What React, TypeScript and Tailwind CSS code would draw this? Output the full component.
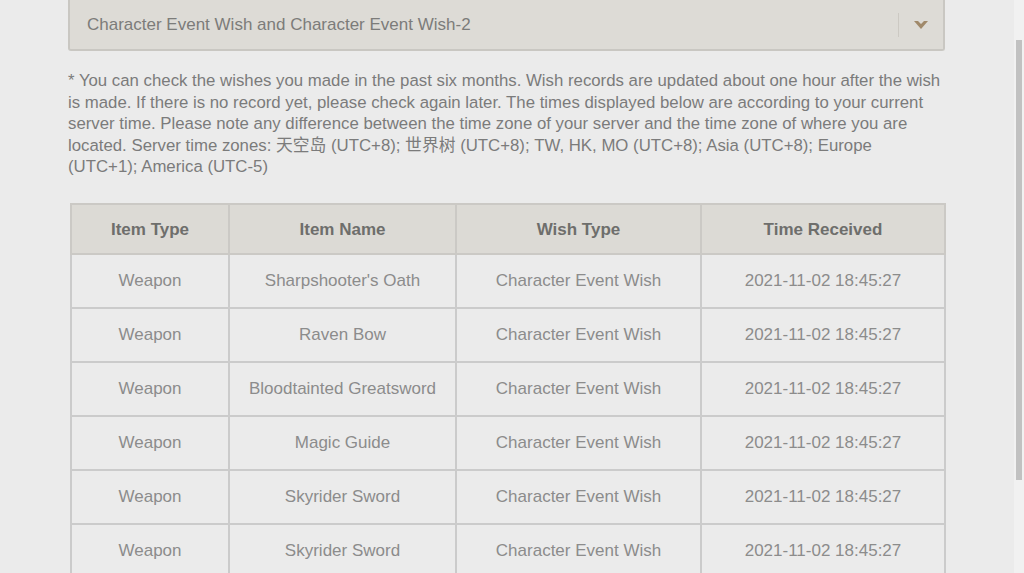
import React from 'react';

const rows = [
    ['Weapon', "Sharpshooter's Oath", 'Character Event Wish', '2021-11-02 18:45:27'],
    ['Weapon', 'Raven Bow', 'Character Event Wish', '2021-11-02 18:45:27'],
    ['Weapon', 'Bloodtainted Greatsword', 'Character Event Wish', '2021-11-02 18:45:27'],
    ['Weapon', 'Magic Guide', 'Character Event Wish', '2021-11-02 18:45:27'],
    ['Weapon', 'Skyrider Sword', 'Character Event Wish', '2021-11-02 18:45:27'],
    ['Weapon', 'Skyrider Sword', 'Character Event Wish', '2021-11-02 18:45:27'],
];

const App: React.FC = () => {
    return (
        <div className="flex h-[573px] w-[1024px] overflow-hidden bg-[#ebebeb]" style={{ fontFamily: '"Liberation Sans", Arial, "Noto Sans CJK SC", sans-serif' }}>
            <div className="min-w-0 flex-1 pl-[68px] pr-[69px]">
                {/* wish type dropdown, top edge scrolled off */}
                <div className="flex h-[51px] items-center rounded-b-[3px] border-x-2 border-b-2 border-[#c9c7c2] bg-[#dddbd6] pl-[17px]">
                    <span className="flex-1 text-[17px] text-[#7c7c7a]">Character Event Wish and Character Event Wish-2</span>
                    <div className="h-[24px] w-[1px] bg-[#ccc9c3]" />
                    <div className="flex w-[44px] justify-center">
                        <svg width="14" height="10" viewBox="0 0 14 10">
                            <path d="M0 1 L7 9 L14 1 L10 1 L7 4 L4 1 Z" fill="#a0896a" />
                        </svg>
                    </div>
                </div>

                <p className="mt-[19px] whitespace-nowrap text-[16.8px] leading-[21.5px] text-[#7b7b7b]">
                    * You can check the wishes you made in the past six months. Wish records are updated about one hour after the wish<br />
                    is made. If there is no record yet, please check again later. The times displayed below are according to your current<br />
                    server time. Please note any difference between the time zone of your server and the time zone of where you are<br />
                    located. Server time zones: 天空岛 (UTC+8); 世界树 (UTC+8); TW, HK, MO (UTC+8); Asia (UTC+8); Europe<br />
                    (UTC+1); America (UTC-5)
                </p>

                <table className="mt-[25px] ml-[2px] w-[876px] table-fixed border-collapse text-center text-[17px]">
                    <colgroup>
                        <col className="w-[158px]" />
                        <col className="w-[227px]" />
                        <col className="w-[245px]" />
                        <col />
                    </colgroup>
                    <thead>
                        <tr className="h-[50px] bg-[#dcdad5]">
                            {['Item Type', 'Item Name', 'Wish Type', 'Time Received'].map(h => (
                                <th key={h} className="border-2 border-[#cbc9c5] pt-[2px] font-bold text-[#6e6e6c]">{h}</th>
                            ))}
                        </tr>
                    </thead>
                    <tbody>
                        {rows.map((r, i) => (
                            <tr key={i} className="h-[54px]">
                                {r.map((c, j) => (
                                    <td key={j} className="border-2 border-[#cbcbcb] text-[#8c8c8c]">{c}</td>
                                ))}
                            </tr>
                        ))}
                    </tbody>
                </table>
            </div>

            {/* browser scrollbar */}
            <div className="flex w-[10px] flex-col bg-[#f1f1f1] pt-[40px]">
                <div className="ml-[2px] h-[440px] w-[6px] bg-[#c1c1c1]" />
            </div>
        </div>
    );
};

export default App;
